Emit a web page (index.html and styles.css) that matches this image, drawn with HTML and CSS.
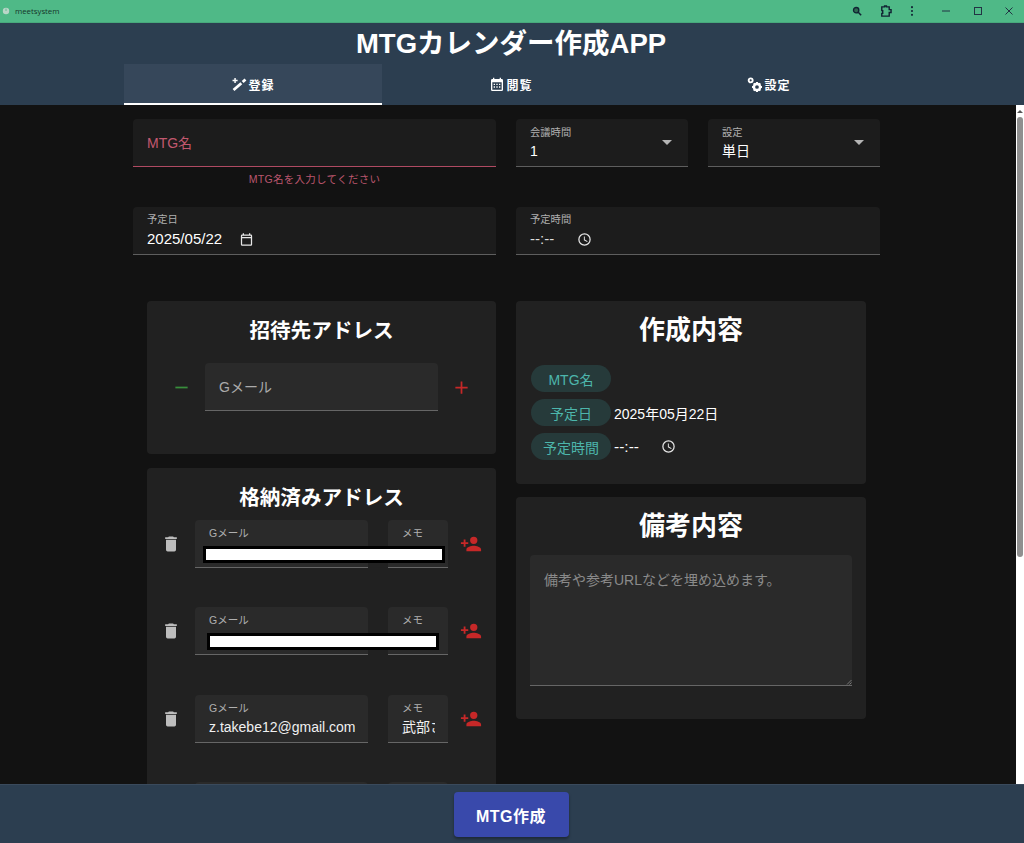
FILE: index.html
```html
<!DOCTYPE html>
<html lang="ja">
<head>
<meta charset="utf-8">
<title>meetsystem</title>
<link rel="stylesheet" href="styles.css">
</head>
<body>
<div class="titlebar">
  <svg class="app-icon" viewBox="0 0 10 10"><circle cx="5" cy="5" r="4" fill="#b9d6c8"/><path d="M5 2v3" stroke="#4fb987"/></svg>
  <span class="app-name">meetsystem</span>
  <div class="win-tools">
    <svg class="wt wt-mag" viewBox="0 0 12 12"><circle cx="5" cy="5" r="3.2" fill="#2d6a50" stroke="#123" stroke-width="1.6"/><path d="M7.5 7.5L11 11" stroke="#123" stroke-width="1.8"/></svg>
    <svg class="wt wt-ext" viewBox="0 0 14 14"><path d="M3 2h3V1h2v1h3v3h2v3h-2v4H3V9h1V6H3z" fill="none" stroke="#123" stroke-width="1.5"/></svg>
    <svg class="wt wt-dots" viewBox="0 0 4 14"><circle cx="2" cy="2.5" r="1.2" fill="#123"/><circle cx="2" cy="7" r="1.2" fill="#123"/><circle cx="2" cy="11.500" r="1.2" fill="#123"/></svg>
    <svg class="wb wb-min" viewBox="0 0 10 10"><path d="M1 5h8" stroke="#234" stroke-width="1"/></svg>
    <svg class="wb wb-max" viewBox="0 0 10 10"><rect x="1.500" y="1.500" width="7" height="7" fill="none" stroke="#234" stroke-width="1"/></svg>
    <svg class="wb wb-close" viewBox="0 0 10 10"><path d="M1.500 1.500l7 7M8.500 1.500l-7 7" stroke="#234" stroke-width="1"/></svg>
  </div>
</div>

<header class="app-header">
  <h1 class="app-title">MTGカレンダー作成APP</h1>
  <nav class="tabs">
    <div class="tab tab-active">
      <svg class="tab-icon" viewBox="0 0 24 24"><path d="M3.800 19.500L15.500 9.300M17.500 7.500l4.200-3.700" fill="none" stroke="currentColor" stroke-width="4.200"/><path d="M5 1.500h2.200v2.700h2.700v2.200H7.200v2.700H5V6.400H2.300V4.200H5z"/></svg>
      <span>登録</span>
    </div>
    <div class="tab">
      <svg class="tab-icon" viewBox="0 0 24 24"><path d="M9 10v2H7v-2zm4 0v2h-2v-2zm4 0v2h-2v-2zm2-7a2 2 0 0 1 2 2v14a2 2 0 0 1-2 2H5a2 2 0 0 1-2-2V5a2 2 0 0 1 2-2h1V1h2v2h8V1h2v2zm0 16V8H5v11zM9 14v2H7v-2zm4 0v2h-2v-2zm4 0v2h-2v-2z"/></svg>
      <span>閲覧</span>
    </div>
    <div class="tab">
      <svg class="tab-icon" viewBox="0 0 24 24"><circle cx="5.500" cy="5" r="3" fill="none" stroke="currentColor" stroke-width="2.800"/><circle cx="15" cy="15" r="4.600" fill="none" stroke="currentColor" stroke-width="3.600"/><path d="M13.500 7.500h3l.5 2.500h-4zM13.500 22.500h3l.5-2.500h-4zM7.500 13.500v3l2.500.5v-4zM22.500 13.500v3l-2.500.5v-4zM9 10.500l2-2 2 1.500-2.500 2.500zM21 19.500l-2 2-2-1.500 2.500-2.500zM21 10.500l-2-2-2 1.500 2.500 2.500zM9 19.500l2 2 2-1.500-2.500-2.500z"/></svg>
      <span>設定</span>
    </div>
  </nav>
</header>

<div class="viewport">
  <main class="content">
    <div class="form-row form-row-top">
      <div class="field-block">
        <div class="field field-error"><span class="field-placeholder">MTG名</span></div>
        <p class="error-text">MTG名を入力してください</p>
      </div>
      <div class="field field-select">
        <div class="field-stack"><span class="field-label">会議時間</span><span class="field-value">1</span></div>
        <i class="caret"></i>
      </div>
      <div class="field field-select">
        <div class="field-stack"><span class="field-label">設定</span><span class="field-value">単日</span></div>
        <i class="caret"></i>
      </div>
    </div>

    <div class="form-row form-row-second">
      <div class="field">
        <div class="field-stack">
          <span class="field-label">予定日</span>
          <span class="field-value field-inline date-value">2025/05/22
            <svg class="picker-icon" viewBox="0 0 24 24"><path d="M19 4h-1V2h-2v2H8V2H6v2H5a2 2 0 0 0-2 2v14a2 2 0 0 0 2 2h14a2 2 0 0 0 2-2V6a2 2 0 0 0-2-2zm0 16H5V10h14zm0-12H5V6h14z"/></svg>
          </span>
        </div>
      </div>
      <div class="field">
        <div class="field-stack">
          <span class="field-label">予定時間</span>
          <span class="field-value field-inline time-value">--:--
            <svg class="picker-icon" viewBox="0 0 24 24"><path d="M12 2a10 10 0 1 0 0 20 10 10 0 0 0 0-20zm0 18a8 8 0 1 1 0-16 8 8 0 0 1 0 16zm.5-13H11v6l5.200 3.100.8-1.300-4.500-2.700z"/></svg>
          </span>
        </div>
      </div>
    </div>

    <div class="panels">
      <div class="panel-col">
        <section class="card card-invite">
          <h2 class="card-title">招待先アドレス</h2>
          <div class="invite-row">
            <svg class="op-icon op-minus" viewBox="0 0 24 24"><path d="M19 13H5v-2h14z"/></svg>
            <div class="invite-input"><span>Gメール</span></div>
            <svg class="op-icon op-plus" viewBox="0 0 24 24"><path d="M19 13h-6v6h-2v-6H5v-2h6V5h2v6h6z"/></svg>
          </div>
        </section>

        <section class="card card-stored">
          <h2 class="card-title card-title-stored">格納済みアドレス</h2>
          <div class="stored-list">
            <div class="stored-row">
              <svg class="trash" viewBox="0 0 24 24"><path d="M6 19a2 2 0 0 0 2 2h8a2 2 0 0 0 2-2V7H6zM19 4h-3.500l-1-1h-5l-1 1H5v2h14z"/></svg>
              <div class="mini-field mini-mail"><span class="mini-label">Gメール</span></div>
              <div class="mini-field mini-memo"><span class="mini-label">メモ</span></div>
              <svg class="person" viewBox="0 0 24 24"><path d="M15 12a4 4 0 1 0 0-8 4 4 0 0 0 0 8zm-9-2V7H4v3H1v2h3v3h2v-3h3v-2zm9 4c-2.700 0-8 1.300-8 4v2h16v-2c0-2.700-5.300-4-8-4z"/></svg>
              <div class="redact redact-one"></div>
            </div>
            <div class="stored-row">
              <svg class="trash" viewBox="0 0 24 24"><path d="M6 19a2 2 0 0 0 2 2h8a2 2 0 0 0 2-2V7H6zM19 4h-3.500l-1-1h-5l-1 1H5v2h14z"/></svg>
              <div class="mini-field mini-mail"><span class="mini-label">Gメール</span></div>
              <div class="mini-field mini-memo"><span class="mini-label">メモ</span></div>
              <svg class="person" viewBox="0 0 24 24"><path d="M15 12a4 4 0 1 0 0-8 4 4 0 0 0 0 8zm-9-2V7H4v3H1v2h3v3h2v-3h3v-2zm9 4c-2.700 0-8 1.300-8 4v2h16v-2c0-2.700-5.300-4-8-4z"/></svg>
              <div class="redact redact-two"></div>
            </div>
            <div class="stored-row">
              <svg class="trash" viewBox="0 0 24 24"><path d="M6 19a2 2 0 0 0 2 2h8a2 2 0 0 0 2-2V7H6zM19 4h-3.500l-1-1h-5l-1 1H5v2h14z"/></svg>
              <div class="mini-field mini-mail"><span class="mini-label">Gメール</span><span class="mini-value">z.takebe12@gmail.com</span></div>
              <div class="mini-field mini-memo"><span class="mini-label">メモ</span><span class="mini-value">武部さん</span></div>
              <svg class="person" viewBox="0 0 24 24"><path d="M15 12a4 4 0 1 0 0-8 4 4 0 0 0 0 8zm-9-2V7H4v3H1v2h3v3h2v-3h3v-2zm9 4c-2.700 0-8 1.300-8 4v2h16v-2c0-2.700-5.300-4-8-4z"/></svg>
            </div>
            <div class="stored-row stored-row-peek">
              <div class="mini-field mini-mail"></div>
              <div class="mini-field mini-memo"></div>
            </div>
          </div>
        </section>
      </div>

      <div class="panel-col panel-col-right">
        <section class="card card-summary">
          <h2 class="card-title card-title-large">作成内容</h2>
          <div class="summary-rows">
            <div class="summary-row"><span class="chip">MTG名</span></div>
            <div class="summary-row"><span class="chip">予定日</span><span class="summary-value">2025年05月22日</span></div>
            <div class="summary-row">
              <span class="chip">予定時間</span>
              <span class="summary-value summary-time">--:--
                <svg class="picker-icon" viewBox="0 0 24 24"><path d="M12 2a10 10 0 1 0 0 20 10 10 0 0 0 0-20zm0 18a8 8 0 1 1 0-16 8 8 0 0 1 0 16zm.5-13H11v6l5.200 3.100.8-1.300-4.500-2.700z"/></svg>
              </span>
            </div>
          </div>
        </section>

        <section class="card card-notes">
          <h2 class="card-title card-title-large">備考内容</h2>
          <div class="notes-box">
            <span class="notes-placeholder">備考や参考URLなどを埋め込めます。</span>
            <svg class="resize-grip" viewBox="0 0 6 6"><path d="M5.500 1L1 5.500M5.500 3.500L3.500 5.500" stroke="#8a8a8a" stroke-width=".8"/></svg>
          </div>
        </section>
      </div>
    </div>
  </main>
  <div class="scrollbar">
    <svg class="scroll-arrow" viewBox="0 0 8 6"><path d="M1 5l3-3 3 3z" fill="#555"/></svg>
    <div class="scroll-thumb"></div>
  </div>
</div>

<footer class="app-footer">
  <button class="create-btn" type="button">MTG作成</button>
</footer>
</body>
</html>
```

FILE: styles.css
```css
* { box-sizing: border-box; }

html, body { height: 100%; }

body {
  margin: 0;
  height: 843px;
  overflow: hidden;
  display: flex;
  flex-direction: column;
  background: #121212;
  color: #fff;
  font-family: "Liberation Sans", "Noto Sans CJK JP", sans-serif;
}

/* window title bar */
.titlebar {
  height: 23px;
  flex: none;
  display: flex;
  align-items: center;
  padding-left: 2px;
  background: #4fb987;
  border-bottom: 1px solid #48a97c;
  color: #16352a;
  font-size: 7.8px;
  font-family: "Open Sans", "Liberation Sans", sans-serif;
}
.app-icon { width: 8px; height: 8px; margin-right: 5px; }
.win-tools { margin-left: auto; display: flex; align-items: center; height: 100%; }
.wt-mag { width: 10px; height: 10px; margin-right: 17px; }
.wt-ext { width: 13px; height: 13px; margin-right: 18px; }
.wt-dots { width: 4px; height: 12px; margin-right: 27px; }
.wb { width: 10px; height: 10px; }
.wb-min { margin-right: 22px; }
.wb-max { margin-right: 21px; }
.wb-close { margin-right: 10px; }

/* app header */
.app-header {
  height: 82px;
  flex: none;
  display: flex;
  flex-direction: column;
  align-items: center;
  padding-right: 2px;
  background: #2c3e50;
}
.app-title {
  margin: 0;
  height: 41px;
  font-size: 27.500px;
  line-height: 42px;
  font-weight: 700;
}
.tabs { display: grid; grid-template-columns: repeat(3, 258px); height: 41px; }
.tab {
  display: flex;
  align-items: center;
  justify-content: center;
  gap: 1px;
  font-size: 12px;
  font-weight: 700;
  letter-spacing: 1px;
  color: #fff;
}
.tab-active { background: #36475a; border-bottom: 2px solid #fff; padding-top: 2px; }
.tab-icon { width: 16px; height: 16px; fill: currentColor; }

/* scrolling viewport */
.viewport { flex: 1; min-height: 0; display: flex; }
.content { flex: 1; min-width: 0; overflow: hidden; padding: 14px 136px 0 133px; background: #121212; }
.scrollbar { width: 8px; flex: none; background: #fff; display: flex; flex-direction: column; align-items: center; }
.scroll-arrow { width: 8px; height: 12px; flex: none; }
.scroll-thumb { width: 6px; height: 440px; background: #8f8f8f; border-radius: 3px; }

/* top form */
.form-row { display: grid; column-gap: 20px; }
.form-row-top { grid-template-columns: 363px 172px 172px; align-items: start; height: 88px; }
.form-row-second { grid-template-columns: 363px 364px; }

.field {
  height: 48px;
  display: flex;
  align-items: center;
  padding: 0 14px;
  background: #1c1c1c;
  border-radius: 4px 4px 0 0;
  border-bottom: 1px solid #5e5e5e;
}
.field-error { border-bottom-color: #b04a62; padding-bottom: 2px; }
.field-placeholder { font-size: 14px; color: #c2586f; }
.error-text {
  margin: 6px 0 0;
  text-align: center;
  font-size: 10.500px;
  letter-spacing: .3px;
  line-height: 12px;
  color: #bb566e;
}
.field-select { justify-content: space-between; padding-right: 16px; }
.field-stack { display: flex; flex-direction: column; align-self: flex-start; padding-top: 7px; }
.field-select .field-stack { padding-top: 8px; }
.field-label { font-size: 10.300px; line-height: 12px; color: #b0b0b0; }
.field-value { font-size: 14px; line-height: 20px; margin-top: 3px; color: #fff; }
.field-select .field-value { margin-top: 2px; }
.field-inline { display: flex; align-items: center; font-size: 15px; }
.date-value svg { margin-left: 17px; }
.time-value svg { margin-left: 23px; }
.time-value { color: #ddd; }
.caret {
  width: 0;
  height: 0;
  border-left: 5px solid transparent;
  border-right: 5px solid transparent;
  border-top: 5px solid #b5b5b5;
}
.picker-icon { width: 15px; height: 15px; fill: #e6e6e6; flex: none; }

/* panels */
.panels {
  display: grid;
  grid-template-columns: 349px 350px;
  column-gap: 20px;
  margin: 46px 0 0 14px;
  align-items: start;
}
.panel-col { display: flex; flex-direction: column; gap: 14px; }
.panel-col-right { gap: 13px; }
.card { background: #212121; border-radius: 4px; }
.card-invite { height: 153px; padding-top: 17px; }
.card-stored { height: 360px; padding-top: 17px; }
.card-summary { height: 183px; padding: 13px 14px 0; }
.card-notes { height: 222px; padding: 13px 14px 0; }
.card-title { margin: 0; text-align: center; font-size: 20.600px; line-height: 26px; font-weight: 700; color: #fff; }
.card-title-large { font-size: 26px; line-height: 32px; }

.invite-row { display: flex; align-items: center; margin-top: 19px; padding-left: 24px; }
.invite-input {
  width: 233px;
  height: 48px;
  margin: 0 13px;
  padding: 0 14px 2px;
  display: flex;
  align-items: center;
  background: #2a2a2a;
  border-radius: 4px 4px 0 0;
  border-bottom: 1px solid #666;
  font-size: 14px;
  color: #aaa;
}
.op-icon { width: 21px; height: 21px; flex: none; }
.op-minus { fill: #388e3c; }
.op-plus { fill: #c62828; }

.card-title-stored { margin-bottom: 9px; }
.stored-list { display: flex; flex-direction: column; gap: 39.400px; }
.stored-row { position: relative; display: flex; align-items: center; height: 48px; padding-left: 14px; }
.stored-row-peek { padding-left: 48px; }
.trash { width: 20px; height: 20px; fill: #bdbdbd; flex: none; margin-right: 14px; }
.mini-field {
  height: 48px;
  display: flex;
  flex-direction: column;
  white-space: nowrap;
  background: #2a2a2a;
  border-radius: 4px 4px 0 0;
  border-bottom: 1px solid #666;
  padding: 7px 13px 0 14px;
}
.mini-mail { width: 173px; margin-right: 20px; }
.mini-memo { width: 60px; margin-right: 12px; }
.mini-label { font-size: 10.500px; line-height: 12px; color: #b0b0b0; }
.mini-value { font-size: 14px; line-height: 20px; margin-top: 3px; color: #f0f0f0; overflow: hidden; }
.person { width: 22px; height: 22px; fill: #c62828; flex: none; }
.redact { position: absolute; background: #fff; border: 3px solid #000; height: 17px; top: 26px; }
.redact-one { left: 56px; width: 242px; }
.redact-two { left: 60px; width: 232px; }

/* summary */
.summary-rows { display: flex; flex-direction: column; gap: 7px; margin: 19px 0 0 1px; }
.summary-row { display: flex; align-items: center; height: 27px; }
.chip {
  width: 80px;
  height: 27px;
  display: flex;
  align-items: center;
  justify-content: center;
  background: #263a3a;
  border-radius: 14px;
  font-size: 14px;
  color: #4db6ac;
}
.summary-value { margin-left: 3px; font-size: 14px; color: #fff; display: flex; align-items: center; }
.summary-time { font-size: 15.500px; }
.summary-time svg { margin-left: 22px; }

.notes-box {
  position: relative;
  margin-top: 13px;
  height: 131px;
  padding: 17px 14px;
  background: #2a2a2a;
  border-radius: 4px 4px 0 0;
  border-bottom: 1px solid #666;
  font-size: 14px;
  line-height: 17px;
  color: #8a8a8a;
}
.resize-grip { position: absolute; right: 0; bottom: 0; width: 6px; height: 6px; }

/* footer */
.app-footer {
  height: 59px;
  flex: none;
  display: flex;
  justify-content: center;
  padding: 7px 2px 0 0;
  background: #2c3e50;
  border-top: 1px solid #3a4a5c;
}
.create-btn {
  width: 115px;
  height: 45px;
  border: 0;
  border-radius: 4px;
  background: #3949ab;
  color: #fff;
  font: 700 16px "Liberation Sans", "Noto Sans CJK JP", sans-serif;
  letter-spacing: .5px;
  box-shadow: 0 2px 3px rgba(0,0,0,.35);
}
```
